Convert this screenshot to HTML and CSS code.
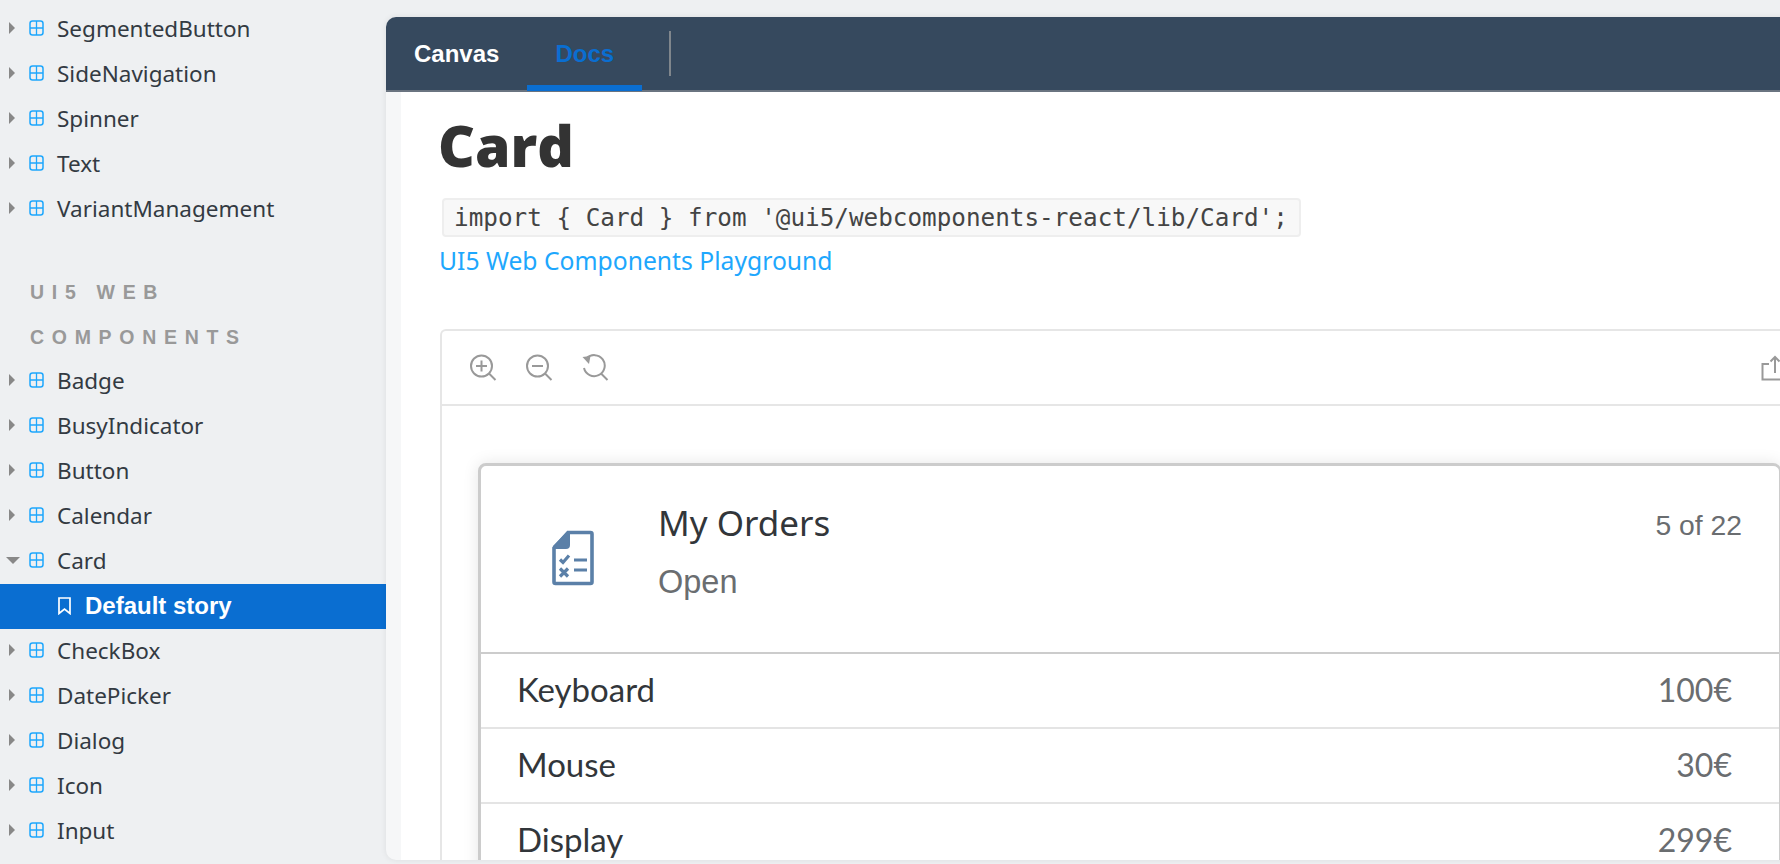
FILE: index.html
```html
<!DOCTYPE html>
<html lang="en">
<head>
<meta charset="utf-8">
<title>Card</title>
<link rel="stylesheet" href="styles.css">
</head>
<body>
<svg class="defs" width="0" height="0" aria-hidden="true">
  <symbol id="grid" viewBox="0 0 15 16"><rect x="1" y="1" width="13" height="14" rx="2.5" fill="none" stroke="currentColor" stroke-width="1.5"/><path d="M7.5 1v14M1 8h13" fill="none" stroke="currentColor" stroke-width="1.3"/></symbol>
</svg>
<aside class="sidebar">
  <ul class="tree">
    <li class="row"><i class="caret"></i><svg class="grid"><use href="#grid"/></svg>SegmentedButton</li>
    <li class="row"><i class="caret"></i><svg class="grid"><use href="#grid"/></svg>SideNavigation</li>
    <li class="row"><i class="caret"></i><svg class="grid"><use href="#grid"/></svg>Spinner</li>
    <li class="row"><i class="caret"></i><svg class="grid"><use href="#grid"/></svg>Text</li>
    <li class="row"><i class="caret"></i><svg class="grid"><use href="#grid"/></svg>VariantManagement</li>
  </ul>
  <h2 class="group">UI5 WEB COMPONENTS</h2>
  <ul class="tree">
    <li class="row"><i class="caret"></i><svg class="grid"><use href="#grid"/></svg>Badge</li>
    <li class="row"><i class="caret"></i><svg class="grid"><use href="#grid"/></svg>BusyIndicator</li>
    <li class="row"><i class="caret"></i><svg class="grid"><use href="#grid"/></svg>Button</li>
    <li class="row"><i class="caret"></i><svg class="grid"><use href="#grid"/></svg>Calendar</li>
    <li class="row"><i class="caret open"></i><svg class="grid"><use href="#grid"/></svg>Card</li>
    <li class="row story"><svg class="bookmark" viewBox="0 0 13 18"><path d="M1 1h11v15.500l-5.500-4.500-5.500 4.500z" fill="none" stroke="currentColor" stroke-width="1.700"/></svg>Default story</li>
    <li class="row"><i class="caret"></i><svg class="grid"><use href="#grid"/></svg>CheckBox</li>
    <li class="row"><i class="caret"></i><svg class="grid"><use href="#grid"/></svg>DatePicker</li>
    <li class="row"><i class="caret"></i><svg class="grid"><use href="#grid"/></svg>Dialog</li>
    <li class="row"><i class="caret"></i><svg class="grid"><use href="#grid"/></svg>Icon</li>
    <li class="row"><i class="caret"></i><svg class="grid"><use href="#grid"/></svg>Input</li>
  </ul>
</aside>
<main class="panel">
  <header class="tabs">
    <span class="tab">Canvas</span>
    <span class="tab active">Docs</span>
    <span class="tab-sep"></span>
  </header>
  <section class="doc">
    <h1 class="title">Card</h1>
    <code class="import">import { Card } from '@ui5/webcomponents-react/lib/Card';</code>
    <a class="link">UI5 Web Components Playground</a>
    <div class="preview">
      <div class="toolbar">
        <svg class="tool" viewBox="0 0 28 28"><g fill="none" stroke="#999" stroke-width="2"><circle cx="12.500" cy="12" r="10.500"/><path d="M20 19.500l6.500 6.500M7 12h11M12.500 6.500v11"/></g></svg>
        <svg class="tool" viewBox="0 0 28 28"><g fill="none" stroke="#999" stroke-width="2"><circle cx="12.500" cy="12" r="10.500"/><path d="M20 19.500l6.500 6.500M7 12h11"/></g></svg>
        <svg class="tool" viewBox="0 0 28 28"><g fill="none" stroke="#999" stroke-width="2"><path d="M5.500 4.500A10.500 10.500 0 1 1 3 14"/><path d="M20 19.500l6.500 6.500"/></g><path d="M1.500 3l8-1-1.500 8z" fill="#999"/></svg>
        <svg class="share" viewBox="0 0 26 26"><g fill="none" stroke="#999" stroke-width="2"><path d="M8 9H1.500v15.500H26V9h-6M14 18V2M9.500 6.500L14 2l4.500 4.500"/></g></svg>
      </div>
      <div class="stage">
        <article class="card">
          <div class="card-head">
            <svg class="card-icon" viewBox="0 0 42 56"><path d="M16 2.500h22.500a1.500 1.500 0 0 1 1.500 1.500v48a1.500 1.500 0 0 1-1.500 1.500h-35a1.500 1.500 0 0 1-1.500-1.500v-34z" fill="none" stroke="#5b80a8" stroke-width="3.600"/><path d="M16 1L1 16v3h13a4 4 0 0 0 4-4V1z" fill="#5b80a8"/><path d="M8 29.500l3 3 6-7M8 38.500l8 8M16 38.500l-8 8M22 30h13M22 40h13" fill="none" stroke="#5b80a8" stroke-width="3.200"/></svg>
            <div class="card-titles">
              <div class="card-title">My Orders</div>
              <div class="card-sub">Open</div>
            </div>
            <div class="card-status">5 of 22</div>
          </div>
          <div class="item"><span>Keyboard</span><span class="price">100€</span></div>
          <div class="item"><span>Mouse</span><span class="price">30€</span></div>
          <div class="item"><span>Display</span><span class="price">299€</span></div>
        </article>
      </div>
    </div>
  </section>
</main>
</body>
</html>
```
FILE: styles.css
```css
* { box-sizing: border-box; }
html, body { margin: 0; height: 100%; overflow: hidden; }
body {
  display: flex;
  background: #eef0f2;
  font-family: "Noto Sans", sans-serif;
  color: #333;
}
.defs { position: absolute; }
.sidebar { flex: 0 0 386px; padding-top: 7px; }
.tree { list-style: none; margin: 0; padding: 0; }
.row {
  display: flex;
  align-items: center;
  height: 45px;
  padding: 0 0 3px 9px;
  font-size: 22.500px;
  color: #333a42;
}
.caret {
  width: 0;
  height: 0;
  margin-right: 14px;
  border-left: 6px solid #888;
  border-top: 6px solid transparent;
  border-bottom: 6px solid transparent;
}
.caret.open {
  width: 14px;
  margin-left: -3px;
  margin-right: 9px;
  height: 7px;
  border-left: 7px solid transparent;
  border-right: 7px solid transparent;
  border-top: 7px solid #888;
  border-bottom: 0;
}
.grid { width: 15px; height: 16px; margin-right: 13px; color: #1ea7fd; }
.group {
  width: 300px;
  margin: 38px 0 -1px;
  padding-left: 30px;
  font-family: "Liberation Sans", sans-serif;
  font-size: 19.500px;
  line-height: 45px;
  font-weight: 700;
  letter-spacing: 7.700px;
  word-spacing: 0;
  color: #999;
}
.story {
  padding: 0 0 2px 58px;
  background: #0a6ed1;
  color: #fff;
  font-family: "Liberation Sans", sans-serif;
  font-weight: 700;
  font-size: 24px;
}
.bookmark { width: 13px; height: 18px; margin-right: 14px; }
.panel {
  flex: 0 0 1500px;
  height: 843px;
  margin-top: 17px;
  border-radius: 10px 10px 0 10px;
  background: #f6f7f8;
  overflow: hidden;
  box-shadow: 0 0 6px rgba(0, 0, 0, 0.08);
}
.tabs {
  display: flex;
  align-items: center;
  height: 75px;
  background: #36495e;
  border-bottom: 2px solid #6a7480;
}
.tab {
  display: flex;
  align-items: center;
  height: 75px;
  padding: 0 28px;
  font-family: "Liberation Sans", sans-serif;
  font-size: 24px;
  font-weight: 700;
  color: #fff;
}
.tab.active {
  color: #0a6ed1;
  border-bottom: 6px solid #0a6ed1;
  padding-top: 6px;
}
.tab-sep { width: 2px; height: 45px; margin-left: 27px; background: #80868c; }
.doc {
  display: flex;
  flex-direction: column;
  align-items: flex-start;
  margin-left: 15px;
  padding: 14px 0 0 39px;
  height: 768px;
  background: #fff;
  overflow: hidden;
}
.title {
  margin: 0 0 0 -2px;
  font-family: "Open Sans", sans-serif;
  font-size: 57px;
  line-height: 78px;
  font-weight: 800;
  color: #333;
}
.import {
  margin: 14px 0 0 2px;
  padding: 0 11px 0 10px;
  height: 39px;
  line-height: 36px;
  font-family: "DejaVu Sans Mono", monospace;
  font-size: 24.300px;
  white-space: nowrap;
  color: #444;
  background: #f8f8f8;
  border: 2px solid #eee;
  border-radius: 4px;
}
.link { margin: 7px 0 0 -1px; font-size: 24.700px; line-height: 34px; color: #1ea7fd; }
.preview {
  flex: none;
  width: 1400px;
  margin-top: 51px;
  border: 2px solid #e6e6e6;
  border-bottom: 0;
  border-radius: 6px 0 0 0;
}
.toolbar {
  display: flex;
  align-items: center;
  gap: 28px;
  height: 75px;
  padding-left: 27px;
  border-bottom: 2px solid #e6e6e6;
}
.tool { flex: none; width: 28px; height: 28px; }
.share { flex: none; width: 26px; height: 26px; margin-left: 1124px; }
.stage { padding: 57px 0 0 36px; }
.card {
  width: 1303px;
  background: #fff;
  border: 2px solid #ccc;
  border-top-width: 3px;
  border-left-width: 3px;
  border-radius: 8px;
  box-shadow: 0 0 16px rgba(0, 0, 0, 0.1);
}
.card-head {
  display: flex;
  align-items: flex-start;
  height: 188px;
  border-bottom: 2px solid #ccc;
}
.card-icon { width: 42px; height: 56px; margin: 64px 64px 0 71px; }
.card-titles { margin-top: 28px; flex: 1; }
.card-title { font-size: 35px; line-height: 58px; color: #32363a; }
.card-sub { font-family: "Liberation Sans", sans-serif; font-size: 32.500px; line-height: 61px; color: #6a6d70; }
.card-status {
  margin: 39px 37px 0 0;
  font-family: "Liberation Sans", sans-serif;
  font-size: 28.300px;
  line-height: 40px;
  color: #6a6d70;
}
.item {
  display: flex;
  align-items: center;
  justify-content: space-between;
  height: 75px;
  padding: 0 47px 3px 36px;
  font-family: "Lato", sans-serif;
  font-size: 33px;
  color: #32363a;
  border-bottom: 2px solid #e4e4e4;
}
.price { font-size: 32px; color: #6a6d70; }
```
